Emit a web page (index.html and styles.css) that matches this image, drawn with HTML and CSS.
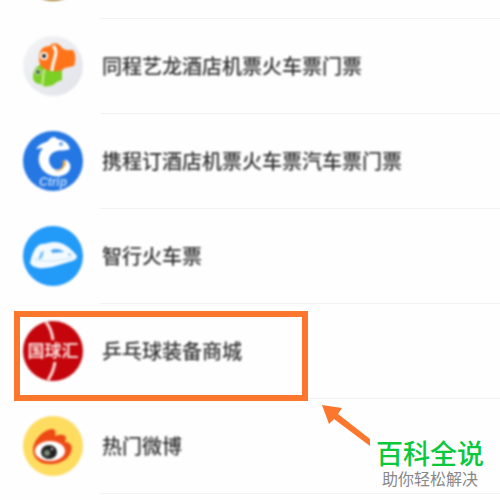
FILE: index.html
```html
<!DOCTYPE html>
<html lang="zh-CN">
<head>
  <meta charset="UTF-8">
  <meta name="viewport" content="width=device-width, initial-scale=1.0">
  <title>小程序</title>
  <link rel="stylesheet" href="styles.css">
</head>
<body>
  <main class="page">
    <ul class="app-list">
      <li class="app-row">
        <svg class="app-icon" viewBox="0 0 60 60" aria-hidden="true">
          <circle cx="30" cy="30" r="30" fill="#a8802e"/>
        </svg>
        <div class="app-body"></div>
      </li>

      <li class="app-row">
        <svg class="app-icon" viewBox="0 0 60 60" aria-hidden="true">
          <defs>
            <linearGradient id="bubble" x1="0" y1="0" x2="1" y2="1">
              <stop offset="0" stop-color="#f3f4f7"/>
              <stop offset="1" stop-color="#e2e3ea"/>
            </linearGradient>
          </defs>
          <circle cx="30" cy="30" r="30" fill="url(#bubble)"/>
          <!-- pez verde -->
          <path d="M10 41C10 34 14 29 20 28L34 30L39 34L39 44L34 46L30 49C25 51 20 51 17 48C13 48 10 45 10 41Z" fill="#7bcf25"/>
          <path d="M22 33C19 38 21 43 19 49" fill="none" stroke="#c9f09c" stroke-width="2"/>
          <circle cx="15" cy="36" r="3" fill="#cfe0c6"/>
          <circle cx="15" cy="36" r="2" fill="#3c5a3c"/>
          <!-- pez naranja -->
          <path d="M16 22C16 14 20 10 27 10C29 6 36 6 39 12L43 14L50 14C53 17 53 26 51 30L42 32C38 36 30 36 24 34C18 32 16 28 16 22Z" fill="#ff7418"/>
          <path d="M30 10C37 16 29 25 29 35" fill="none" stroke="#fff" stroke-width="3"/>
          <circle cx="21" cy="20" r="4" fill="#fff"/>
          <circle cx="21" cy="20" r="2" fill="#111"/>
        </svg>
        <div class="app-body"><span class="app-name">同程艺龙酒店机票火车票门票</span></div>
      </li>

      <li class="app-row">
        <svg class="app-icon" viewBox="0 0 60 60" aria-hidden="true">
          <circle cx="30" cy="30" r="30" fill="#2577e3"/>
          <path d="M13 18C17 12 22 12 25 10C28 5 33 5 34 8C42 9 46 13 47 18C43 20 38 19 34 20C26 22 24 29 28 35C31 40 38 40 41 34C43 30 42 28 42 28C47 31 49 35 46 40C40 48 26 47 19 38C14 31 15 23 20 17C17 17 15 18 13 18Z" fill="#fff"/>
          <path d="M39 29C42 34 38 40 31 40C36 42 43 37 43 31Z" fill="#f2a63c"/>
          <circle cx="38" cy="13" r="2" fill="#6ba4ee"/>
          <text class="ctrip-mark" x="30" y="55" text-anchor="middle">Ctrip</text>
        </svg>
        <div class="app-body"><span class="app-name">携程订酒店机票火车票汽车票门票</span></div>
      </li>

      <li class="app-row">
        <svg class="app-icon" viewBox="0 0 60 60" aria-hidden="true">
          <circle cx="30" cy="30" r="30" fill="#229af8"/>
          <path d="M7 37C9 29 11 21 18 18C23 18 27 16 31 16C40 16 48 22 54 30C54 33 51 35 46 36L29 41C20 43 10 43 7 37Z" fill="#f4faff"/>
          <path d="M28 24C33 22 38 23 41 26L29 27Z" fill="#47a7f0"/>
          <path d="M18 26L21 25L19 32L15 34Z" fill="#70bdf5"/>
          <path d="M45 27L49 29L46 30Z" fill="#70bdf5"/>
          <path d="M11 33C22 37 36 34 50 32" fill="none" stroke="#c5e4fb" stroke-width="1"/>
        </svg>
        <div class="app-body"><span class="app-name">智行火车票</span></div>
      </li>

      <li class="app-row selected">
        <svg class="app-icon" viewBox="0 0 60 60" aria-hidden="true">
          <circle cx="30" cy="30" r="30" fill="#c4060c"/>
          <path d="M23 1C27 6 29 11 30 19M32 41C31 48 29 53 25 59" fill="none" stroke="#fbd9d5" stroke-width="3"/>
          <text class="club-mark" x="30" y="36" text-anchor="middle">国球汇</text>
        </svg>
        <div class="app-body"><span class="app-name">乒乓球装备商城</span></div>
      </li>

      <li class="app-row">
        <svg class="app-icon" viewBox="0 0 60 60" aria-hidden="true">
          <circle cx="30" cy="30" r="30" fill="#fddc60"/>
          <path d="M10 34C10 24 20 14 29 13C33 13 33 17 32 20C37 18 43 18 43 22L42 26C48 26 50 31 48 36C45 45 34 49 24 48C15 47 10 41 10 34Z" fill="#ee4a16"/>
          <ellipse cx="27" cy="35" rx="15" ry="10" fill="#fff"/>
          <ellipse cx="26" cy="36" rx="8" ry="7" fill="#222"/>
          <circle cx="24" cy="37" r="3" fill="#7b8a7b"/>
          <circle cx="29" cy="33" r="1" fill="#fff"/>
        </svg>
        <div class="app-body"><span class="app-name">热门微博</span></div>
      </li>
    </ul>

    <div class="callout">
      <svg class="arrow" viewBox="0 0 48 42" aria-hidden="true">
        <path d="M0 0L20 3L16 9L48 34V41L12 14L7 19Z" fill="#fb772d"/>
      </svg>
      <div class="brand">
        <strong class="brand-name">百科全说</strong>
        <span class="brand-slogan">助你轻松解决</span>
      </div>
    </div>
  </main>
</body>
</html>
```

FILE: styles.css
```css
*,
*::after {
  box-sizing: border-box;
}

body {
  margin: 0;
  background: #fefefe;
  color: #333;
  font-family: "Noto Sans CJK SC", sans-serif;
}

.page {
  position: relative;
  height: 100vh;
  overflow: hidden;
}

/* the list is already scrolled: only the bottom of the first row shows */
.app-list {
  list-style: none;
  margin: -76px 0 0;
  padding: 0;
}

.app-row {
  position: relative;
  display: flex;
  align-items: flex-start;
  gap: 17px;
  height: 95px;
  padding-left: 23px;
}

.app-icon {
  flex: none;
  width: 60px;
  height: 60px;
  margin-top: 17px;
  filter: blur(1px);
}

.app-body {
  flex: 1;
  display: flex;
  align-items: center;
  height: 100%;
  padding-left: 2px;
  border-bottom: 1px solid #f2f2f2;
}

.app-name {
  font-size: 20px;
  font-weight: 500;
  line-height: 28px;
  white-space: nowrap;
  filter: blur(1px);
}

.selected::after {
  content: "";
  position: absolute;
  top: 7px;
  left: 14px;
  width: 294px;
  height: 90px;
  border: 6px solid #fb772d;
}

.ctrip-mark {
  fill: #b9d4f7;
  font: italic bold 12px "Liberation Sans", sans-serif;
}

.club-mark {
  fill: #f8d5d3;
  font-size: 17px;
  font-weight: bold;
}

.callout {
  position: absolute;
  right: 0;
  bottom: 12px;
  display: flex;
  align-items: flex-end;
}

.arrow {
  width: 48px;
  height: 42px;
  margin-bottom: 41px;
}

.brand {
  display: flex;
  flex-direction: column;
  align-items: center;
  width: 130px;
  padding-right: 10px;
  background: #fefefe;
}

.brand-name {
  color: #0bc83c;
  font-size: 27px;
  font-weight: 500;
  line-height: 30px;
}

.brand-slogan {
  color: #888;
  font-size: 16px;
  line-height: 20px;
}
```
